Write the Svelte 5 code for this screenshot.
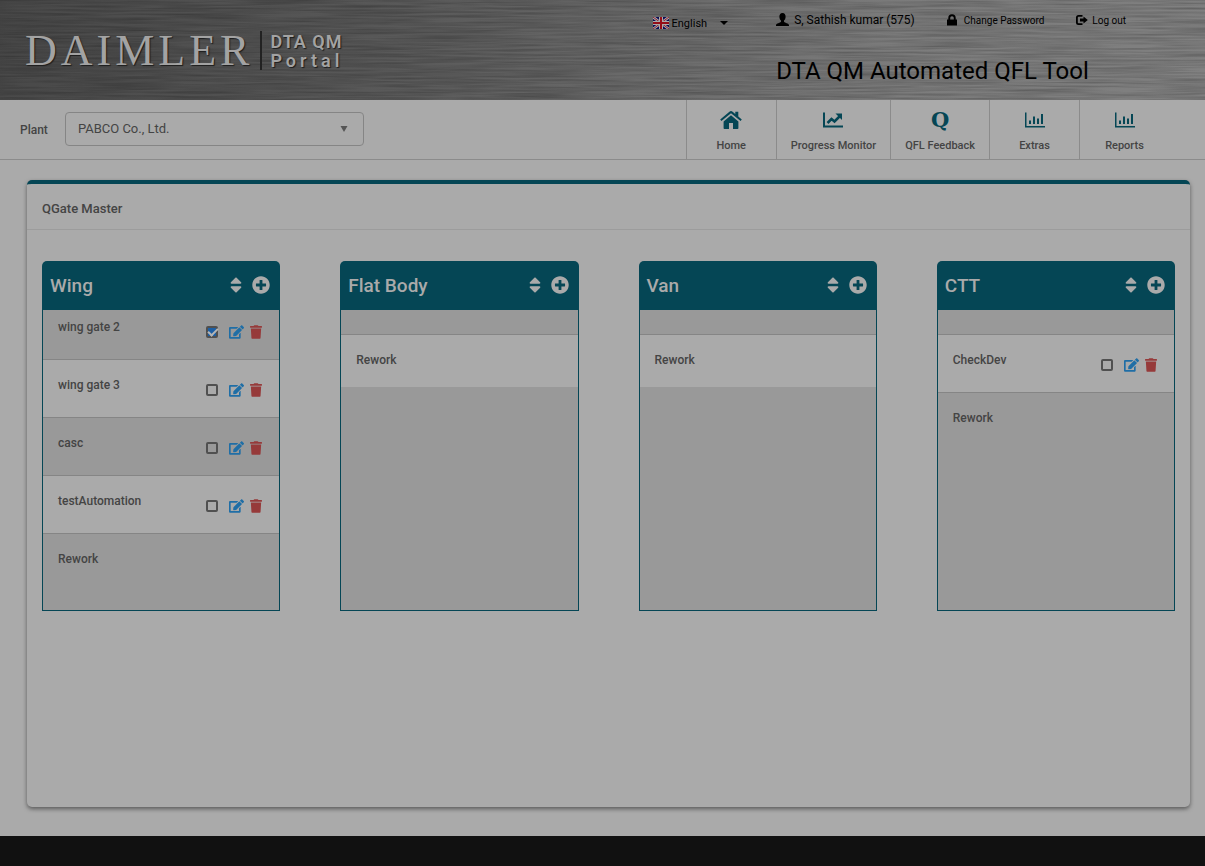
<script>
  let plant = $state('PABCO Co., Ltd.');

  const nav = [
    { label: 'Home', icon: 'home' },
    { label: 'Progress Monitor', icon: 'line' },
    { label: 'QFL Feedback', icon: 'q' },
    { label: 'Extras', icon: 'bars' },
    { label: 'Reports', icon: 'bars' }
  ];

  let columns = $state([
    {
      name: 'Wing',
      gates: [
        { name: 'wing gate 2', active: true },
        { name: 'wing gate 3', active: false },
        { name: 'casc', active: false },
        { name: 'testAutomation', active: false },
        { name: 'Rework', fixed: true }
      ]
    },
    { name: 'Flat Body', spacer: true, gates: [{ name: 'Rework', fixed: true }] },
    { name: 'Van', spacer: true, gates: [{ name: 'Rework', fixed: true }] },
    {
      name: 'CTT',
      spacer: true,
      gates: [
        { name: 'CheckDev', active: false },
        { name: 'Rework', fixed: true }
      ]
    }
  ]);
</script>

<div class="page">
  <header class="banner">
    <svg class="steel" aria-hidden="true" preserveAspectRatio="none">
      <filter id="brushed" x="0" y="0" width="100%" height="100%">
        <feTurbulence type="fractalNoise" baseFrequency="0.012 0.5" numOctaves="3" seed="4" />
        <feColorMatrix values="0 0 0 0 0  0 0 0 0 0  0 0 0 0 0  0.4 0 0 0 -0.12" />
      </filter>
      <rect width="100%" height="100%" filter="url(#brushed)" />
    </svg>
    <div class="brand">
      <span class="wordmark">DAIMLER</span>
      <span class="portal"><span class="line1">DTA QM</span><span class="line2">Portal</span></span>
    </div>
    <div class="tools">
      <button class="language" type="button">
        <svg width="16" height="12" viewBox="0 0 16 12" aria-hidden="true">
          <rect width="16" height="12" fill="#0b0b55" />
          <path d="M0 0L16 12M16 0L0 12" stroke="#aaa" stroke-width="2.6" />
          <path d="M0 0L16 12M16 0L0 12" stroke="#8b1020" stroke-width="0.9" />
          <path d="M8 0V12M0 6H16" stroke="#aaa" stroke-width="4" />
          <path d="M8 0V12M0 6H16" stroke="#960d18" stroke-width="2" />
        </svg>
        <span>English</span>
        <svg class="caret" width="8" height="4" viewBox="0 0 8 4" aria-hidden="true"><path d="M0 0H8L4 4Z" /></svg>
      </button>
      <div class="account">
        <div class="links">
          <span class="user">
            <svg width="13" height="14" viewBox="0 0 13 14" aria-hidden="true">
              <path d="M6.500 0C8.700 0 9.800 1.700 9.600 4C9.500 5.600 8.800 6.900 8 7.600V8.800C8.400 9.800 13 10.300 13 12.300V13H0V12.300C0 10.300 4.600 9.800 5 8.800V7.600C4.200 6.900 3.500 5.600 3.400 4C3.200 1.700 4.300 0 6.500 0Z" />
            </svg>
            S, Sathish kumar (575)
          </span>
          <a href="#password">
            <svg width="10" height="12" viewBox="0 0 10 12" aria-hidden="true">
              <path d="M0 5.500H1.300V4A3.700 3.700 0 0 1 8.700 4V5.500H10V11.500H0ZM3.200 5.500H6.800V4A1.800 1.800 0 0 0 3.200 4Z" fill-rule="evenodd" />
            </svg>
            Change Password
          </a>
          <a class="logout" href="#logout">
            <svg width="12" height="10" viewBox="0 0 12 10" aria-hidden="true">
              <path d="M6.500 0.900H2.500Q0.900 0.900 0.900 2.500V7.500Q0.900 9.100 2.500 9.100H6.500" fill="none" stroke="#000" stroke-width="1.800" />
              <path d="M4 3.600H7.500V1.400L11.800 5L7.500 8.600V6.400H4Z" />
            </svg>
            Log out
          </a>
        </div>
        <h1>DTA QM Automated QFL Tool</h1>
      </div>
    </div>
  </header>

  <div class="bar">
    <div class="plant">
      <label for="plant">Plant</label>
      <div class="pick">
        <select id="plant" bind:value={plant}>
          <option>PABCO Co., Ltd.</option>
        </select>
        <svg width="8" height="6" viewBox="0 0 8 6" aria-hidden="true"><path d="M0.500 0H7.500L4 6Z" fill="#555" /></svg>
      </div>
    </div>
    <nav>
      {#each nav as item}
        <a href="#{item.label.toLowerCase().replace(' ', '-')}">
          {#if item.icon === 'home'}
            <svg width="22" height="20" viewBox="0 0 22 20" aria-hidden="true">
              <path d="M11 5.200L18.400 11.500V18.200Q18.400 19 17.600 19H13V13H9V19H4.400Q3.600 19 3.600 18.200V11.500Z" />
              <path d="M11 1Q11.800 1 12.600 1.700L15.300 4V1.800H18.300V6.500L21.800 9.500L20.600 11L11 3.200L1.400 11L0.200 9.500L9.400 1.700Q10.200 1 11 1Z" />
            </svg>
          {:else if item.icon === 'line'}
            <svg width="22" height="20" viewBox="0 0 22 20" aria-hidden="true">
              <path d="M1 2.500H3V15.500H21V17.500H1Z" />
              <path d="M5.500 13L9.500 9L12.500 11.500L18 6" fill="none" stroke="#054655" stroke-width="2.500" />
              <path d="M13.500 3.500H20V10Z" />
            </svg>
          {:else if item.icon === 'q'}
            <span class="q">Q</span>
          {:else}
            <svg width="22" height="20" viewBox="0 0 22 20" aria-hidden="true">
              <path d="M1 2.500H2.500V16H21V17.500H1ZM5 10.500H7V14H5ZM9 6.500H11V14H9ZM13 8.500H15V14H13ZM17 4H19V14H17Z" />
            </svg>
          {/if}
          <span>{item.label}</span>
        </a>
      {/each}
    </nav>
  </div>

  <main>
    <section class="panel">
      <h2>QGate Master</h2>
      <div class="columns">
        {#each columns as column}
          <article>
            <div class="head">
              <h3>{column.name}</h3>
              <button type="button" aria-label="Sort {column.name}">
                <svg width="12" height="20" viewBox="0 0 320 512"><path d="M41 288h238c21.400 0 32.100 25.900 17 41L177 448c-9.400 9.400-24.600 9.400-33.900 0L24 329c-15.100-15.100-4.400-41 17-41zm255-105L177 64c-9.400-9.400-24.600-9.400-33.900 0L24 183c-15.100 15.100-4.400 41 17 41h238c21.400 0 32.100-25.900 17-41z" /></svg>
              </button>
              <button type="button" aria-label="Add gate to {column.name}">
                <svg width="18" height="18" viewBox="0 0 512 512"><path d="M256 8C119 8 8 119 8 256s111 248 248 248 248-111 248-248S393 8 256 8zm144 276c0 6.600-5.400 12-12 12h-92v92c0 6.600-5.400 12-12 12h-56c-6.600 0-12-5.400-12-12v-92h-92c-6.600 0-12-5.400-12-12v-56c0-6.600 5.400-12 12-12h92v-92c0-6.600 5.400-12 12-12h56c6.600 0 12 5.400 12 12v92h92c6.600 0 12 5.400 12 12v56z" /></svg>
              </button>
            </div>
            <div class="body">
              <ul>
                {#if column.spacer}<li class="spacer"></li>{/if}
                {#each column.gates as gate}
                  <li class:fixed={gate.fixed}>
                    <span class="name">{gate.name}</span>
                    {#if !gate.fixed}
                      <span class="actions">
                        <input type="checkbox" bind:checked={gate.active} aria-label="Activate {gate.name}" />
                        <button type="button" aria-label="Edit {gate.name}">
                          <svg width="15" height="14" viewBox="0 0 576 512" fill="#1f6ea6"><path d="M402.600 83.200l90.200 90.200c3.800 3.800 3.800 10 0 13.800L274.400 405.600l-92.800 10.300c-12.400 1.400-22.900-9.100-21.500-21.500l10.300-92.800L388.800 83.200c3.800-3.800 10-3.800 13.800 0zm162-22.900l-48.800-48.800c-15.200-15.200-39.900-15.200-55.200 0l-35.400 35.400c-3.800 3.800-3.800 10 0 13.800l90.200 90.200c3.800 3.800 10 3.800 13.800 0l35.400-35.400c15.200-15.300 15.200-40 0-55.200zM384 346.200V448H64V128h229.800c3.200 0 6.200-1.300 8.500-3.500l40-40c7.600-7.600 2.200-20.500-8.500-20.500H48C21.500 64 0 85.500 0 112v352c0 26.500 21.500 48 48 48h352c26.500 0 48-21.500 48-48V306.200c0-10.700-12.900-16-20.500-8.500l-40 40c-2.200 2.300-3.500 5.300-3.500 8.500z" /></svg>
                        </button>
                        <button type="button" aria-label="Delete {gate.name}">
                          <svg width="12" height="14" viewBox="0 0 448 512" fill="#963a3a"><path d="M432 32H312l-9.400-18.700A24 24 0 0 0 281.100 0H166.800a23.720 23.720 0 0 0-21.400 13.300L136 32H16A16 16 0 0 0 0 48v32a16 16 0 0 0 16 16h416a16 16 0 0 0 16-16V48a16 16 0 0 0-16-16zM53.200 467a48 48 0 0 0 47.900 45h245.800a48 48 0 0 0 47.900-45L416 128H32z" /></svg>
                        </button>
                      </span>
                    {/if}
                  </li>
                {/each}
              </ul>
            </div>
          </article>
        {/each}
      </div>
    </section>
  </main>

  <footer></footer>
</div>

<style>
  :global(body) {
    margin: 0;
    background: #aaa;
  }
  .page {
    display: flex;
    flex-direction: column;
    min-height: 100vh;
    font-family: Roboto, 'Liberation Sans', sans-serif;
    font-size: 12px;
    color: #444;
  }
  .page * {
    box-sizing: border-box;
  }
  svg {
    display: block;
    flex: none;
  }
  button {
    border: 0;
    padding: 0;
    background: none;
    font: inherit;
    color: inherit;
    cursor: pointer;
  }
  a {
    color: inherit;
    text-decoration: none;
  }

  .banner {
    position: relative;
    display: flex;
    justify-content: space-between;
    height: 100px;
    background: linear-gradient(100deg, #484848 0%, #5a5a5a 35%, #6c6c6c 55%, #7c7c7c 75%, #808080 100%);
    color: #000;
  }
  .steel {
    position: absolute;
    inset: 0;
    width: 100%;
    height: 100%;
  }
  .brand,
  .tools {
    position: relative;
    display: flex;
  }
  .brand {
    align-items: center;
    gap: 7px;
    padding-left: 25px;
    color: #a3a3a3;
    text-shadow: 1px 1px 1px #1c1c1c;
  }
  .wordmark {
    font-family: 'Liberation Serif', serif;
    font-size: 44px;
    letter-spacing: 4px;
  }
  .portal {
    display: flex;
    flex-direction: column;
    border-left: 2px solid #222;
    padding: 1px 0 0 8px;
    font-size: 18px;
    line-height: 19px;
    font-weight: 600;
    letter-spacing: 1px;
  }
  .line2 {
    letter-spacing: 4px;
  }
  .tools {
    padding-right: 79px;
    gap: 48px;
  }
  .language {
    display: flex;
    align-items: center;
    align-self: flex-start;
    gap: 3px;
    height: 16px;
    margin-top: 15px;
    font-size: 11px;
  }
  .caret {
    margin-left: 10px;
  }
  .account {
    display: flex;
    flex-direction: column;
  }
  .links {
    display: flex;
    align-items: center;
    gap: 32px;
    height: 40px;
    font-size: 10px;
  }
  .links a,
  .user {
    display: flex;
    align-items: center;
    gap: 7px;
    white-space: nowrap;
  }
  .links .logout {
    gap: 4px;
  }
  .links .user {
    font-size: 12px;
    gap: 5px;
  }
  h1 {
    margin: 0;
    padding-top: 16px;
    font-size: 24px;
    line-height: 30px;
    font-weight: 400;
    white-space: nowrap;
  }

  .bar {
    display: flex;
    justify-content: space-between;
    height: 60px;
    border-bottom: 1px solid #8b8b8b;
  }
  .plant {
    display: flex;
    align-items: center;
    gap: 17px;
    padding: 0 0 2px 20px;
  }
  .plant label {
    padding-top: 2px;
    font-weight: 500;
  }
  .pick {
    display: grid;
    align-items: center;
    width: 299px;
  }
  .pick select,
  .pick svg {
    grid-area: 1 / 1;
  }
  .pick svg {
    justify-self: end;
    margin-right: 16px;
    pointer-events: none;
  }
  .pick select {
    appearance: none;
    width: 100%;
    height: 34px;
    padding: 0 12px;
    border: 1px solid #858585;
    border-radius: 4px;
    background: none;
    font: inherit;
    font-size: 13px;
    color: inherit;
  }
  nav {
    display: flex;
    padding-right: 36px;
  }
  nav a {
    display: flex;
    flex-direction: column;
    align-items: center;
    gap: 8px;
    min-width: 90px;
    padding: 10px 14px 0;
    border-left: 1px solid #8b8b8b;
    font-size: 11px;
    line-height: 16px;
    font-weight: 500;
    white-space: nowrap;
  }
  nav svg {
    fill: #054655;
  }
  .q {
    font-family: 'DejaVu Serif', serif;
    font-size: 21px;
    line-height: 20px;
    font-weight: 700;
    color: #054655;
  }

  main {
    display: flex;
    flex: 1;
    padding: 20px 15px 29px 27px;
  }
  .panel {
    flex: 1;
    min-width: 0;
    border-top: 4px solid #054655;
    border-radius: 5px;
    box-shadow: 0 2px 4px #5a5a5a;
    background: #aaa;
  }
  h2 {
    margin: 0;
    padding: 15px 15px 10px;
    border-bottom: 1px solid #9c9c9c;
    font-size: 13px;
    line-height: 20px;
    font-weight: 500;
  }
  .columns {
    display: grid;
    grid-template-columns: repeat(4, 1fr);
    gap: 60px;
    padding: 31px 15px;
  }
  article {
    min-width: 0;
  }
  .head {
    display: flex;
    align-items: center;
    gap: 10px;
    height: 49px;
    padding: 0 10px 1px 8px;
    border-radius: 5px 5px 0 0;
    background: #054655;
    color: #aaa;
  }
  .head svg {
    fill: #aaa;
  }
  h3 {
    flex: 1;
    margin: 0;
    font-size: 19px;
    font-weight: 500;
  }
  .body {
    height: 301px;
    overflow: hidden;
    border: 1px solid #054655;
    border-top: 0;
    background: #999;
  }
  ul {
    margin: -8px 0 0;
    padding: 0;
    list-style: none;
  }
  li {
    display: flex;
    justify-content: space-between;
    height: 58px;
    padding: 17px 17px 0 15px;
    border-bottom: 1px solid #858585;
    line-height: 16px;
    font-weight: 500;
  }
  li:nth-child(even) {
    background: #aaa;
  }
  .spacer {
    height: 33px;
  }
  .fixed {
    height: 52px;
    border-bottom: 0;
  }
  .actions {
    display: flex;
    align-items: center;
    gap: 6px;
    height: 25px;
  }
  .actions input {
    appearance: none;
    display: grid;
    place-items: center;
    width: 12px;
    height: 12px;
    margin: 0 5px 0 0;
    border: 2px solid #505050;
    border-radius: 2px;
  }
  .actions input:checked {
    border-color: #505050;
    background: #1c5fa5;
  }
  .actions input:checked::after {
    content: '';
    width: 8px;
    height: 4px;
    margin-bottom: 3px;
    border: solid #b5b5b5;
    border-width: 0 0 2px 2px;
    rotate: -45deg;
  }

  footer {
    height: 30px;
    background: #111;
  }
</style>
